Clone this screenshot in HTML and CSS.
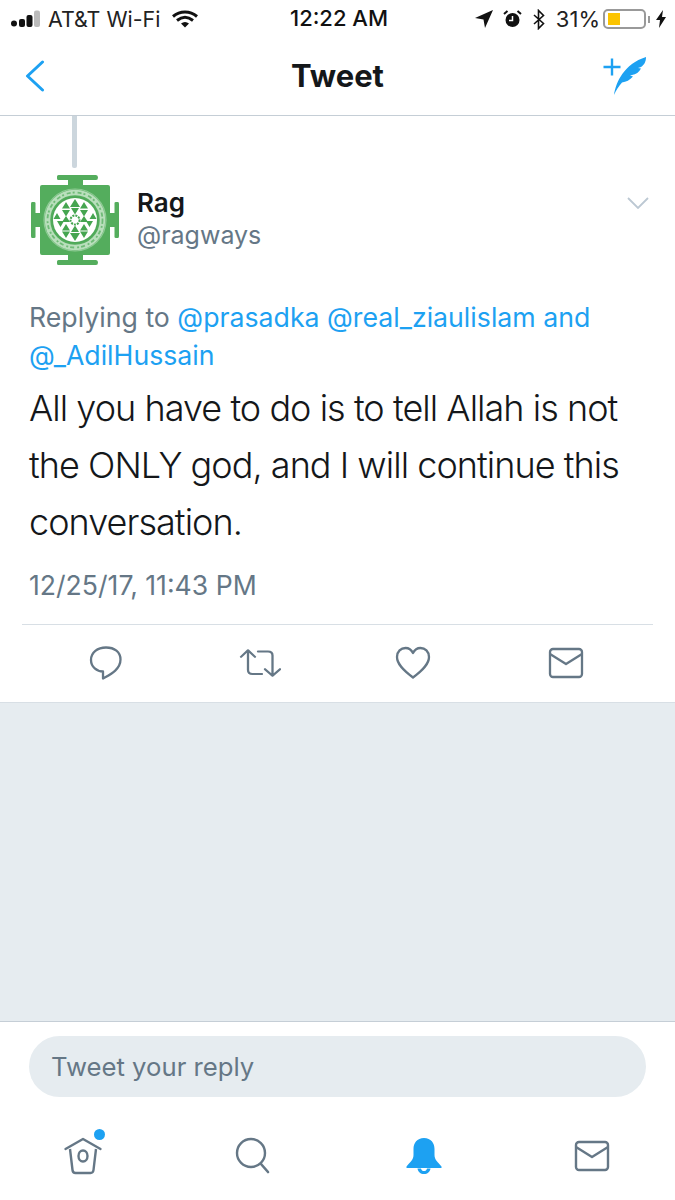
FILE: index.html
```html
<!DOCTYPE html>
<html lang="en">
<head>
<meta charset="utf-8">
<title>Tweet</title>
<link rel="stylesheet" href="styles.css">
</head>
<body>
<div class="screen">
  <header class="status">
    <div class="st-left">
      <svg class="signal" width="30" height="18" viewBox="0 0 30 18"><circle cx="4" cy="13.500" r="3" fill="#111"/><rect x="9" y="9" width="6" height="8" rx="2" fill="#111"/><rect x="16.500" y="5" width="6" height="12" rx="2" fill="#111"/><rect x="24" y="0.500" width="6" height="16.500" rx="2" fill="#bbb"/></svg>
      <span class="carrier">AT&amp;T Wi-Fi</span>
      <svg class="wifi" width="26" height="18" viewBox="0 0 26 18"><path d="M1 6.500C8 .5 18 .5 25 6.500M5 10.500C10 6.500 16 6.500 21 10.500" fill="none" stroke="#111" stroke-width="3"/><path d="M9 13.500C11.500 11.500 14.500 11.500 17 13.500L13 17.500Z" fill="#111"/></svg>
    </div>
    <div class="st-time">12:22 AM</div>
    <div class="st-right">
      <svg width="18" height="18" viewBox="0 0 18 18"><path d="M18 0 0 8 8.500 9.500 10 18Z" fill="#111"/></svg>
      <svg width="19" height="18" viewBox="0 0 19 18"><circle cx="9.500" cy="10" r="7" fill="#111"/><path d="M9.500 6v4.500H6" fill="none" stroke="#fff" stroke-width="1.500"/><path d="M1 4 4.500 1M18 4 14.500 1" stroke="#111" stroke-width="2"/></svg>
      <svg width="14" height="21" viewBox="0 0 14 20"><path d="M2 5.500 11.500 14 6.500 19V1L11.500 6 2 14.500" fill="none" stroke="#111" stroke-width="1.600"/></svg>
      <span class="pct">31%</span>
      <div class="battery"><div class="charge"></div></div>
      <span class="nub"></span>
      <svg class="bolt" width="10" height="18" viewBox="0 0 10 18"><path d="M7 0 0 10H4L3 18 10 7H6Z" fill="#111"/></svg>
    </div>
  </header>

  <nav class="navbar">
    <svg class="back" width="20" height="32" viewBox="0 0 20 32"><path d="M17.500 2 2.500 16 17.500 30" fill="none" stroke="#1da1f2" stroke-width="3" stroke-linecap="round" stroke-linejoin="round"/></svg>
    <h1 class="nav-title">Tweet</h1>
    <svg class="compose" width="44" height="40" viewBox="0 0 44 40"><path d="M0.500 11H17.500M9 2.500V19.500" stroke="#1da1f2" stroke-width="2.400" fill="none"/><path d="M11 39C13 26 21 8 43 1 43 6 41 9 38 11L35 12 38 12.500C36 16 33 18.500 29 19L27 19.500 30 20.500C27 24 23 26 19 26.500 16 30 13 34 11 39Z" fill="#1da1f2"/></svg>
  </nav>

  <main class="tweet">
    <div class="thread-line"></div>
    <div class="author">
      <svg class="avatar" width="90" height="90" viewBox="0 0 90 90">
        <path d="M27 1.500Q27 0 28.500 0H66Q68 0 68 2.500T66 5H53V10H78Q80 10 80 12V38H84.500V28Q84.500 27 86 27H88Q89 27 89 29V61Q89 63 88 63H86Q84.500 63 84.500 62V52H80V78Q80 80 78 80H53V85H66Q68 85 68 87.500T66 90H28.500Q27 90 27 88.500V86.500Q27 85 28.500 85H38V80H12Q10 80 10 78V52H5.500V62Q5.500 63 4 63H2Q1 63 1 61V29Q1 27 2 27H4Q5.500 27 5.500 28V38H10V12Q10 10 12 10H38V5H28.500Q27 5 27 3.500Z" fill="#54ad5d"/>
        <circle cx="45" cy="45" r="31" fill="none" stroke="#8fcb95" stroke-width="1.200"/>
        <circle cx="45" cy="45" r="27.500" fill="none" stroke="#b9dfbc" stroke-width="5.500"/>
        <circle cx="45" cy="45" r="27.500" fill="none" stroke="#6fbb77" stroke-width="1.800" stroke-dasharray="4 2 2 3"/>
        <circle cx="45" cy="45" r="23.500" fill="#4ea858"/>
        <circle cx="45" cy="45" r="22" fill="#fff"/>
        <path d="M45 24l5 8h-10zM36 27l4 6.500h-8zM54 27l4 6.500h-8zM41 33h8l-4 6.500zM32 35h8l-4 6.500zM50 35h8l-4 6.500zM27 38l3.500 6h-7zM63 38l3.500 6h-7zM36 41l4 6h-8zM54 41l4 6h-8zM27 46h7l-3.500 6zM56 46h7l-3.500 6zM45 66l5-8h-10zM36 63l4-6.500h-8zM54 63l4-6.500h-8zM41 57h8l-4-6.500zM36 49l4 6.500h-8zM54 49l4 6.500h-8z" fill="#45a550"/>
        <circle cx="45" cy="45" r="4.500" fill="none" stroke="#45a550" stroke-width="2" stroke-dasharray="2 1"/>
      </svg>
      <div class="names">
        <div class="name">Rag</div>
        <div class="handle">@ragways</div>
      </div>
      <svg class="chev" width="22" height="12" viewBox="0 0 22 12"><path d="M1 1 11 11 21 1" fill="none" stroke="#bcc8d3" stroke-width="1.800"/></svg>
    </div>
    <p class="replying">Replying to <a>@prasadka</a> <a>@real_ziaulislam</a> <a>and</a><br><a>@_AdilHussain</a></p>
    <p class="body">All you have to do is to tell Allah is not<br>the ONLY god, and I will continue this<br>conversation.</p>
    <p class="stamp">12/25/17, 11:43 PM</p>
    <div class="actions">
      <svg width="36" height="36" viewBox="0 0 36 36"><path d="M18 2.500C9.500 2.500 3 7.500 3 15C3 22 9 26.500 15 26.500V33.500C21 30 32.500 25 32.500 14.500 32.500 7 26.500 2.500 18 2.500Z" fill="none" stroke="#657786" stroke-width="2.300" stroke-linejoin="round"/></svg>
      <svg width="42" height="30" viewBox="0 0 42 34" preserveAspectRatio="none"><path d="M2 10 9 2.500 16 10M9 3V25C9 28 10.500 29.500 13.500 29.500H23M19 4H29C32 4 33.500 5.500 33.500 8.500V31M26 24 33.500 31.500 41 24" fill="none" stroke="#657786" stroke-width="2.300" stroke-linecap="round" stroke-linejoin="round"/></svg>
      <svg class="act-heart" width="36" height="34" viewBox="0 0 36 34"><path d="M18 31.500C8 24 2 18 2 11 2 5.500 6 2 10.500 2 14 2 16.500 4 18 7 19.500 4 22 2 25.500 2 30 2 34 5.500 34 11 34 18 28 24 18 31.500Z" fill="none" stroke="#657786" stroke-width="2.300" stroke-linejoin="round"/></svg>
      <svg width="36" height="32" viewBox="0 0 36 32"><rect x="2" y="2" width="32" height="28" rx="3" fill="none" stroke="#657786" stroke-width="2.300"/><path d="M2 7 18 17 34 7" fill="none" stroke="#657786" stroke-width="2.300" stroke-linejoin="round"/></svg>
    </div>
  </main>

  <div class="gutter"></div>

  <section class="reply-bar">
    <div class="reply-input">Tweet your reply</div>
  </section>

  <footer class="tabs">
    <div class="tab tab-home">
      <svg width="42" height="44" viewBox="0 0 42 44"><path d="M8 15 10.500 36C10.700 38 11.500 39 13.500 39H28.500C30.500 39 31.300 38 31.500 36L34 15" fill="none" stroke="#657786" stroke-width="2.400"/><path d="M3.500 15 21 5 38.500 15" fill="none" stroke="#657786" stroke-width="2.400" stroke-linecap="round" stroke-linejoin="round"/><ellipse cx="21" cy="22" rx="4.500" ry="5.500" fill="none" stroke="#657786" stroke-width="2.400"/></svg>
      <span class="dot"></span>
    </div>
    <svg class="tab" width="38" height="38" viewBox="0 0 38 38"><circle cx="16" cy="16" r="14" fill="none" stroke="#657786" stroke-width="2.400"/><path d="M26 27 33 35" stroke="#657786" stroke-width="2.600" stroke-linecap="round"/></svg>
    <svg class="tab" width="38" height="38" viewBox="0 0 38 38"><path d="M19 1C26 1 29.500 6 29.500 12V18C29.500 23 33 25 36.500 29.500V31H1.500V29.500C5 25 8.500 23 8.500 18V12C8.500 6 12 1 19 1Z" fill="#1da1f2"/><path d="M12.500 31.500C13 35 15.500 37 19 37 22.500 37 25 35 25.500 31.500H22C21.500 33.500 20.500 34 19 34 17.500 34 16.500 33.500 16 31.500Z" fill="#1da1f2"/></svg>
    <svg class="tab" width="38" height="32" viewBox="0 0 38 32"><rect x="2" y="2" width="32" height="28" rx="3" fill="none" stroke="#657786" stroke-width="2.400"/><path d="M2 7 18 17 34 7" fill="none" stroke="#657786" stroke-width="2.400" stroke-linejoin="round"/></svg>
  </footer>
</div>
</body>
</html>
```
FILE: styles.css
```css
* { box-sizing: border-box; }
html, body { margin: 0; padding: 0; background: #fff; }
body { font-family: "Liberation Sans", Arial, sans-serif; }
.screen { width: 675px; height: 1200px; display: flex; flex-direction: column; overflow: hidden; }

.status { height: 38px; flex: none; display: flex; align-items: center; padding: 0 9px 0 10px; position: relative; color: #111; }
.st-left { display: flex; align-items: center; gap: 8px; flex: 1; }
.carrier { font-family: "Inter", sans-serif; font-size: 21.400px; letter-spacing: 0; color: #222; }
.wifi { margin-left: 4px; }
.st-time { position: absolute; left: 290px; top: 5px; font-family: "Inter", sans-serif; font-size: 22px; font-weight: 500; }
.st-right { display: flex; align-items: center; gap: 10px; }
.pct { font-family: "Inter", sans-serif; font-size: 22px; color: #222; }
.battery { width: 43px; height: 20px; border: 2px solid #999; border-radius: 5px; padding: 2px 3px; margin-left: -7px; }
.charge { width: 12px; height: 12px; background: #fcc400; }
.nub { width: 2px; height: 7px; background: #999; margin-left: -8px; }
.bolt { margin-left: -4px; }

.navbar { height: 78px; flex: none; display: flex; align-items: center; justify-content: space-between; padding: 0 28px 2px 25px; border-bottom: 1px solid #c5ced6; position: relative; }
.nav-title { position: absolute; left: 0; right: 0; top: 19px; margin: 0; text-align: center; font-family: "Inter", sans-serif; font-size: 31px; font-weight: 700; color: #14171a; }

.tweet { height: 587px; flex: none; padding: 0 22px; position: relative; border-bottom: 1px solid #d8dfe5; }
.thread-line { width: 5px; height: 52px; background: #ccd6dd; margin-left: 50px; border-radius: 0 0 2px 2px; }
.author { display: flex; align-items: center; height: 90px; margin-top: 7px; margin-left: 8px; position: relative; }
.names { margin-left: 17px; margin-bottom: 2px; }
.name { font-family: "Inter", sans-serif; font-weight: 600; font-size: 26px; color: #14171a; line-height: 32px; }
.handle { font-family: "Inter", sans-serif; font-size: 25px; color: #657786; line-height: 32px; }
.chev { position: absolute; right: 4px; top: 22px; }
.replying { margin: 33px 0 0 7px; font-family: "Inter", sans-serif; font-size: 26.700px; line-height: 38px; color: #657786; white-space: nowrap; }
.replying a { color: #1da1f2; }
.body { margin: 6px 0 0 7px; font-family: "Inter", sans-serif; font-size: 36px; line-height: 57px; letter-spacing: -0.96px; color: #14171a; font-weight: 300; white-space: nowrap; }
.stamp { margin: 14px 0 0 7px; font-family: "Inter", sans-serif; font-size: 26.600px; line-height: 40px; color: #657786; }
.actions { margin-top: 19px; border-top: 1px solid #d8dfe5; display: flex; justify-content: space-between; align-items: center; padding: 20px 69px 0 66px; }
.act-heart { margin-left: -2px; margin-right: 2px; }

.gutter { height: 319px; flex: none; background: #e6ecf0; border-bottom: 1px solid #c5ced6; }
.reply-bar { height: 96px; flex: none; padding: 14px 29px 0; }
.reply-input { height: 61px; border-radius: 31px; background: #e6ecf0; font-family: "Inter", sans-serif; font-size: 25.700px; line-height: 61px; padding-left: 22px; color: #657786; }
.tabs { flex: 1; display: flex; justify-content: space-between; align-items: center; padding: 0 63px 7px 62px; }
.tab { display: block; }
.tab-home { position: relative; height: 44px; }
.dot { position: absolute; left: 31.500px; top: -5px; width: 11px; height: 11px; border-radius: 50%; background: #1da1f2; }
```
